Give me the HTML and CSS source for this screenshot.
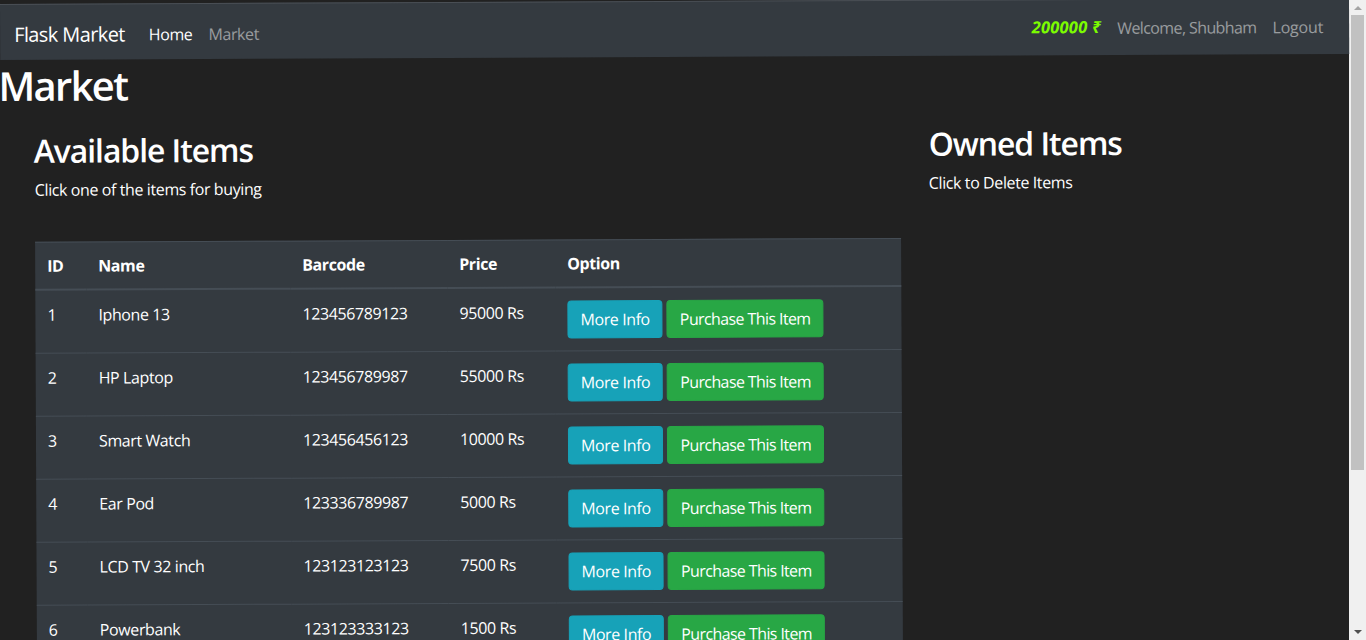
FILE: index.html
```html
<!DOCTYPE html>
<html lang="en">
<head>
<meta charset="utf-8">
<title>Market</title>
<link rel="stylesheet" href="styles.css">
</head>
<body>
<div class="page">
  <nav class="navbar">
    <div class="nav-left">
      <a class="brand" href="#">Flask Market</a>
      <ul class="nav-list">
        <li><a class="nav-link active" href="#">Home</a></li>
        <li><a class="nav-link" href="#">Market</a></li>
      </ul>
    </div>
    <ul class="nav-list nav-right">
      <li><span class="nav-link budget">200000 ₹</span></li>
      <li><span class="nav-link">Welcome, Shubham</span></li>
      <li><a class="nav-link logout" href="#">Logout</a></li>
    </ul>
  </nav>

  <h1 class="page-title">Market</h1>

  <div class="market-row">
    <section class="col-available">
      <h2 class="section-title">Available Items</h2>
      <p class="section-note">Click one of the items for buying</p>
      <table class="items">
        <colgroup>
          <col class="w-id">
          <col class="w-name">
          <col class="w-barcode">
          <col class="w-price">
          <col class="w-option">
        </colgroup>
        <thead>
          <tr><th>ID</th><th>Name</th><th>Barcode</th><th>Price</th><th>Option</th></tr>
        </thead>
        <tbody>
          <tr>
            <td>1</td><td>Iphone 13</td><td>123456789123</td><td>95000 Rs</td>
            <td><div class="actions"><button class="btn btn-info">More Info</button><button class="btn btn-success">Purchase This Item</button></div></td>
          </tr>
          <tr>
            <td>2</td><td>HP Laptop</td><td>123456789987</td><td>55000 Rs</td>
            <td><div class="actions"><button class="btn btn-info">More Info</button><button class="btn btn-success">Purchase This Item</button></div></td>
          </tr>
          <tr>
            <td>3</td><td>Smart Watch</td><td>123456456123</td><td>10000 Rs</td>
            <td><div class="actions"><button class="btn btn-info">More Info</button><button class="btn btn-success">Purchase This Item</button></div></td>
          </tr>
          <tr>
            <td>4</td><td>Ear Pod</td><td>123336789987</td><td>5000 Rs</td>
            <td><div class="actions"><button class="btn btn-info">More Info</button><button class="btn btn-success">Purchase This Item</button></div></td>
          </tr>
          <tr>
            <td>5</td><td>LCD TV 32 inch</td><td>123123123123</td><td>7500 Rs</td>
            <td><div class="actions"><button class="btn btn-info">More Info</button><button class="btn btn-success">Purchase This Item</button></div></td>
          </tr>
          <tr>
            <td>6</td><td>Powerbank</td><td>123123333123</td><td>1500 Rs</td>
            <td><div class="actions"><button class="btn btn-info">More Info</button><button class="btn btn-success">Purchase This Item</button></div></td>
          </tr>
        </tbody>
      </table>
    </section>

    <section class="col-owned">
      <h2 class="section-title">Owned Items</h2>
      <p class="section-note">Click to Delete Items</p>
    </section>
  </div>
</div>

<aside class="scrollbar" aria-hidden="true">
  <div class="sb-button"><span class="sb-arrow sb-up"></span></div>
  <div class="sb-track"><div class="sb-thumb"></div></div>
  <div class="sb-button sb-bottom"><span class="sb-arrow sb-down"></span></div>
</aside>
</body>
</html>
```

FILE: styles.css
```css
html {
  background: #212121;
}

body {
  margin: 0;
  display: flex;
  align-items: flex-start;
  overflow: hidden;
  height: 100vh;
  background: #212121;
  color: #fff;
  font-family: "Open Sans", "Noto Sans", sans-serif;
  font-size: 16px;
  line-height: 1.5;
  letter-spacing: -0.4px;
}

/* the captured page is very slightly tilted */
.page {
  flex: 1;
  min-width: 0;
  transform-origin: 0 0;
  transform: translateY(4px) rotate(-0.26deg);
}

/* ---------- window scrollbar ---------- */
.scrollbar {
  flex: none;
  width: 17px;
  height: 100vh;
  display: flex;
  flex-direction: column;
  background: #f0f0f0;
}

.sb-button {
  flex: none;
  height: 15px;
  display: flex;
  align-items: center;
  justify-content: center;
}

.sb-bottom {
  height: 17px;
}

.sb-arrow {
  width: 0;
  height: 0;
  border-left: 4px solid transparent;
  border-right: 4px solid transparent;
}

.sb-up {
  border-bottom: 4px solid #a3a3a3;
}

.sb-down {
  border-top: 4px solid #505050;
}

.sb-track {
  flex: 1;
}

.sb-thumb {
  height: 455px;
  margin: 0 2px;
  background: #c1c1c1;
}

/* ---------- navbar ---------- */
.navbar {
  box-sizing: border-box;
  height: 56px;
  padding: 0 18px 0 14px;
  display: flex;
  align-items: center;
  justify-content: space-between;
  background: #343a40;
  border-top: 1px solid #4a4f55;
}

.nav-left {
  display: flex;
  align-items: center;
  margin-top: 4px;
}

.brand {
  color: #fff;
  text-decoration: none;
  font-size: 20px;
  line-height: 30px;
  padding: 5px 0;
  margin-right: 16px;
  letter-spacing: -0.6px;
}

.nav-list {
  list-style: none;
  margin: 0;
  padding: 0;
  display: flex;
  align-items: center;
}

.nav-link {
  display: block;
  padding: 8px;
  color: rgba(255, 255, 255, 0.5);
  text-decoration: none;
}

.nav-link.active {
  color: #fff;
}

.nav-right .nav-link {
  letter-spacing: -0.6px;
}

.nav-right .logout {
  letter-spacing: -0.2px;
}

.nav-right .budget {
  color: #7cfc00;
  font-weight: 700;
  font-style: italic;
  font-size: 16.5px;
  letter-spacing: 0.2px;
  padding-right: 8px;
}

/* ---------- content ---------- */
.page-title {
  margin: 2px 0 8px -2px;
  font-size: 40px;
  font-weight: 600;
  line-height: 1.2;
  letter-spacing: -1.7px;
}

.market-row {
  display: grid;
  grid-template-columns: 866px 1fr;
  column-gap: 28px;
  padding-left: 34px;
  align-items: start;
}

.col-available {
  margin-top: 14px;
}

.col-owned {
  margin-top: 11px;
}

.section-title {
  margin: 0 0 8px;
  font-size: 32px;
  font-weight: 600;
  line-height: 1.2;
  letter-spacing: -1.1px;
}

.col-available .section-title {
  margin-left: -1px;
}

.section-note {
  margin: 0;
}

/* ---------- table ---------- */
.items {
  width: 866px;
  margin-top: 40px;
  border-collapse: collapse;
  table-layout: fixed;
  background: #343a40;
  color: #fff;
}

.w-id { width: 51px; }
.w-name { width: 204px; }
.w-barcode { width: 157px; }
.w-price { width: 108px; }
.w-option { width: 346px; }

.items th,
.items td {
  padding: 12px;
  text-align: left;
  vertical-align: top;
  border-top: 1px solid #454d55;
  white-space: nowrap;
}

.items thead th {
  padding-top: 11px;
  padding-bottom: 11px;
  font-weight: 700;
  border-bottom: 2px solid #454d55;
}

.actions {
  display: flex;
  gap: 4px;
}

.btn {
  font-family: inherit;
  font-size: 16px;
  line-height: 24px;
  letter-spacing: -0.4px;
  padding: 6px 12px;
  border: 1px solid transparent;
  border-radius: 4px;
  color: #fff;
  cursor: pointer;
}

.btn-info {
  background: #17a2b8;
  border-color: #17a2b8;
}

.btn-success {
  background: #28a745;
  border-color: #28a745;
  letter-spacing: -0.6px;
}
```
